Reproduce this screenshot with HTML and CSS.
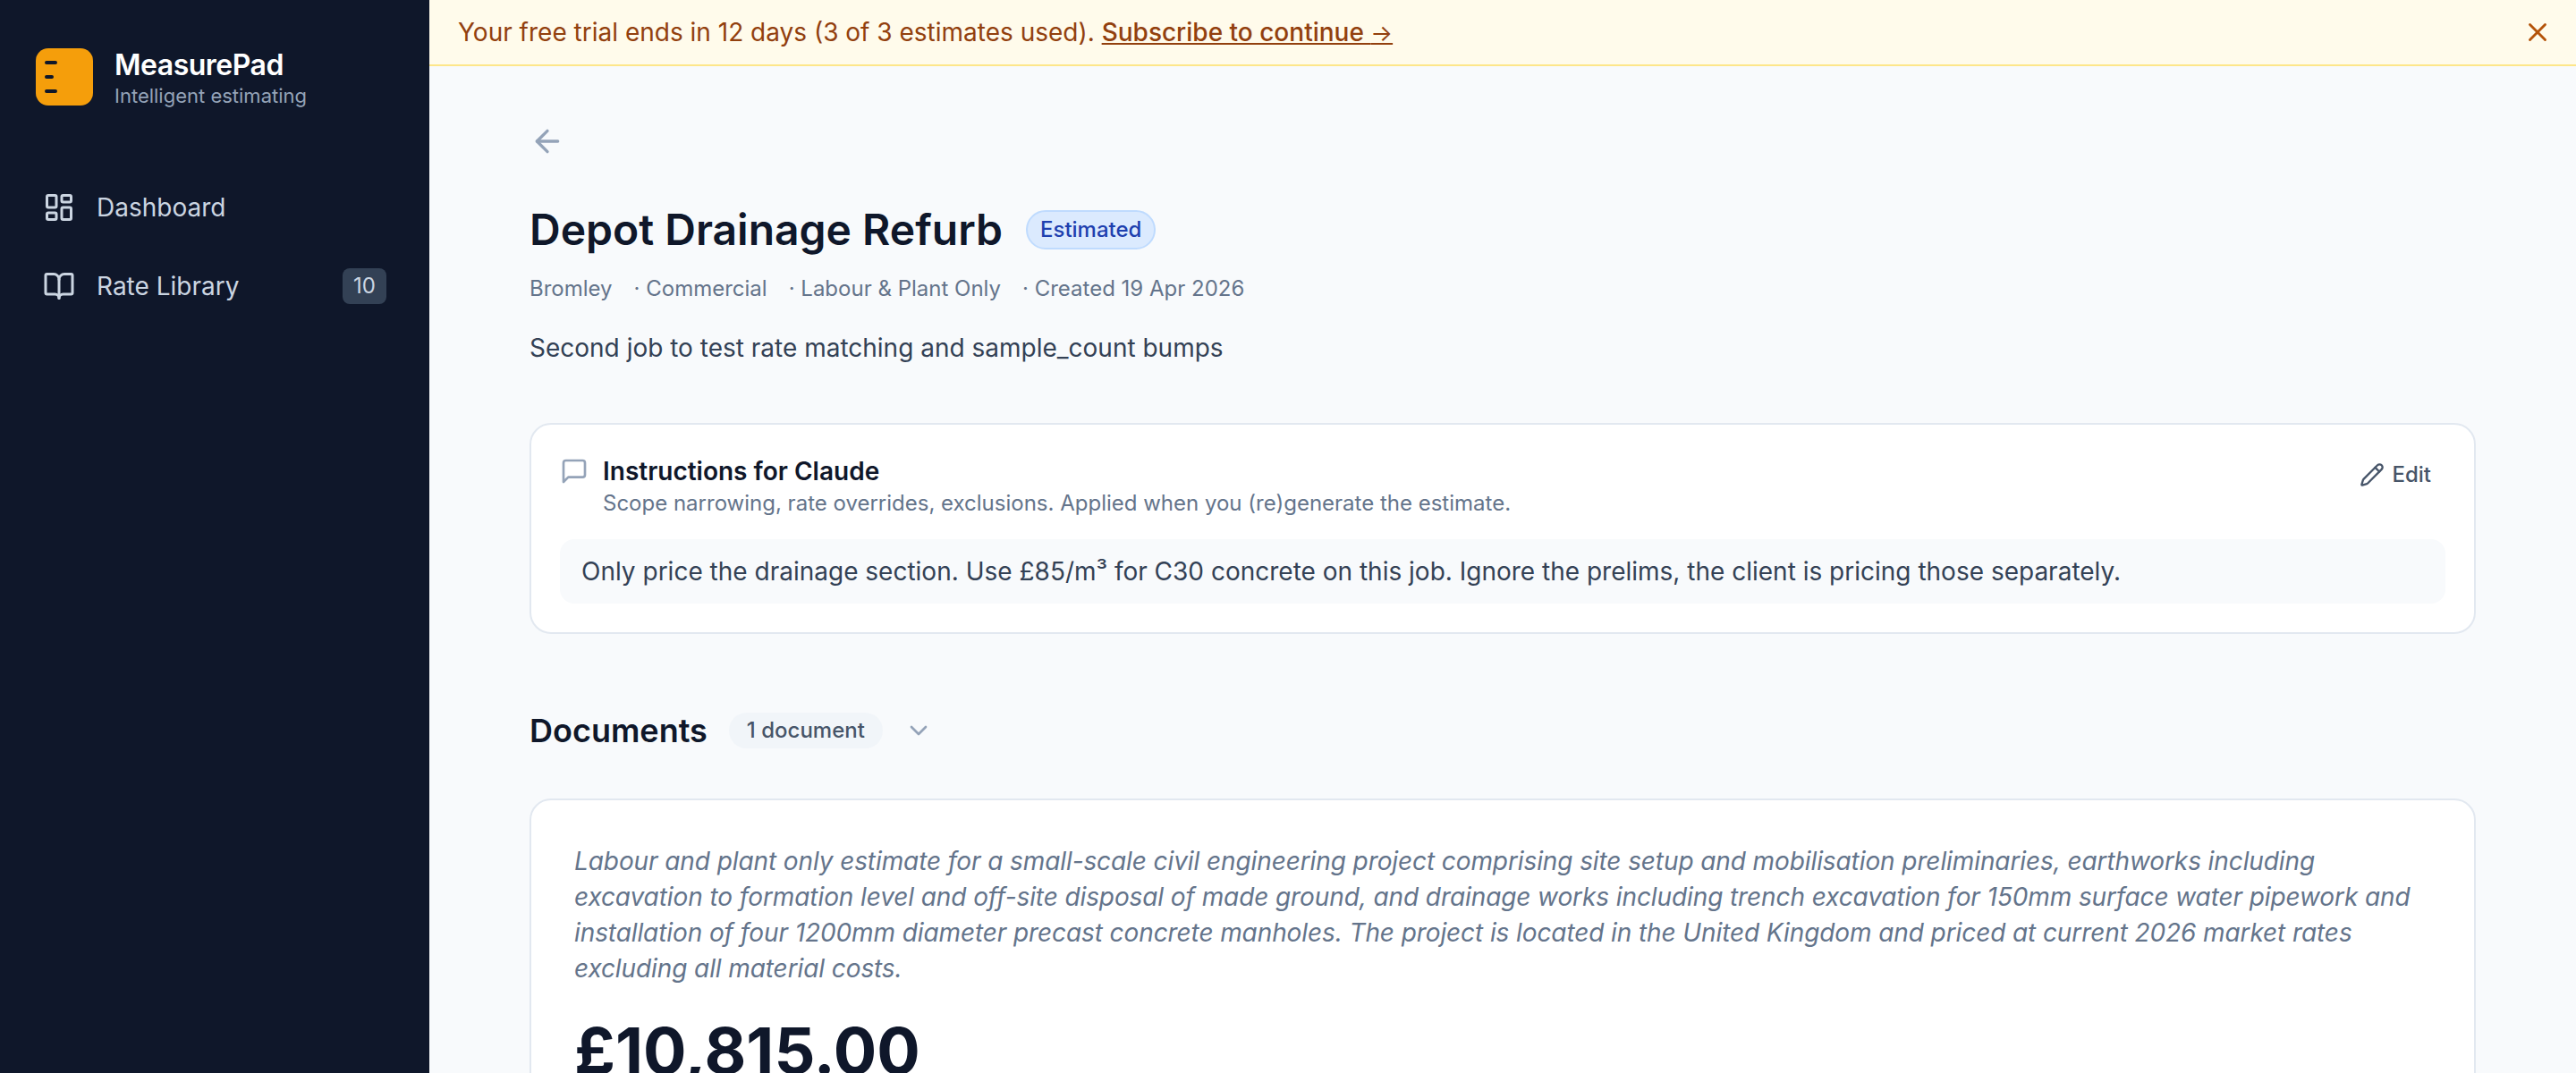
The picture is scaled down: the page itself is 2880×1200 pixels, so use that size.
FILE: index.html
```html
<!DOCTYPE html>
<html lang="en">
<head>
<meta charset="utf-8">
<title>MeasurePad</title>
<link rel="stylesheet" href="styles.css">
</head>
<body>
<div class="app">
  <aside class="sidebar">
    <div class="brand">
      <svg class="logo" viewBox="0 0 64 64" aria-hidden="true">
        <rect width="64" height="64" rx="14" fill="#f59e0b"/>
        <path d="M12 16h10M12 32h6M12 48h10" stroke="#0f172a" stroke-width="4" stroke-linecap="round" fill="none"/>
      </svg>
      <div class="brand-text">
        <div class="brand-name">MeasurePad</div>
        <div class="brand-sub">Intelligent estimating</div>
      </div>
    </div>
    <nav class="nav">
      <a class="nav-item">
        <svg class="icon nav-icon" viewBox="0 0 24 24"><rect x="3" y="3" width="7" height="9" rx="1"/><rect x="14" y="3" width="7" height="5" rx="1"/><rect x="14" y="12" width="7" height="9" rx="1"/><rect x="3" y="16" width="7" height="5" rx="1"/></svg>
        <span class="nav-label">Dashboard</span>
      </a>
      <a class="nav-item">
        <svg class="icon nav-icon" viewBox="0 0 24 24"><path d="M12 7v14"/><path d="M3 18a1 1 0 0 1-1-1V4a1 1 0 0 1 1-1h5a4 4 0 0 1 4 4 4 4 0 0 1 4-4h5a1 1 0 0 1 1 1v13a1 1 0 0 1-1 1h-6a3 3 0 0 0-3 3 3 3 0 0 0-3-3z"/></svg>
        <span class="nav-label">Rate Library</span>
        <span class="nav-count">10</span>
      </a>
    </nav>
  </aside>
  <div class="main">
    <div class="banner">
      <p class="banner-text">Your free trial ends in 12 days (3 of 3 estimates used). <a class="banner-link">Subscribe to continue <span class="banner-arrow">→</span></a></p>
      <svg class="icon banner-close" viewBox="0 0 24 24"><path d="M18 6 6 18"/><path d="m6 6 12 12"/></svg>
    </div>
    <div class="content">
      <svg class="icon back" viewBox="0 0 24 24"><path d="m12 19-7-7 7-7"/><path d="M19 12H5"/></svg>
      <div class="title-row">
        <h1 class="title">Depot Drainage Refurb</h1>
        <span class="status">Estimated</span>
      </div>
      <div class="meta">
        <span>Bromley</span>
        <span>· Commercial</span>
        <span>· Labour &amp; Plant Only</span>
        <span>· Created 19 Apr 2026</span>
      </div>
      <p class="desc">Second job to test rate matching and sample_count bumps</p>

      <section class="card instructions">
        <div class="instr-head">
          <svg class="icon instr-icon" viewBox="0 0 24 24"><path d="M21 15a2 2 0 0 1-2 2H7l-4 4V5a2 2 0 0 1 2-2h14a2 2 0 0 1 2 2z"/></svg>
          <div class="instr-titles">
            <h2 class="instr-title">Instructions for Claude</h2>
            <p class="instr-sub">Scope narrowing, rate overrides, exclusions. Applied when you (re)generate the estimate.</p>
          </div>
          <button class="edit">
            <svg class="icon edit-icon" viewBox="0 0 24 24"><path d="M21.174 6.812a1 1 0 0 0-3.986-3.987L3.842 16.174a2 2 0 0 0-.5.83l-1.321 4.352a.5.5 0 0 0 .623.622l4.353-1.32a2 2 0 0 0 .83-.497z"/><path d="m15 5 4 4"/></svg>
            <span>Edit</span>
          </button>
        </div>
        <div class="instr-body">Only price the drainage section. Use £85/m³ for C30 concrete on this job. Ignore the prelims, the client is pricing those separately.</div>
      </section>

      <div class="docs-head">
        <h2 class="docs-title">Documents</h2>
        <span class="docs-pill">1 document</span>
        <svg class="icon docs-chevron" viewBox="0 0 24 24"><path d="m6 9 6 6 6-6"/></svg>
      </div>

      <section class="card estimate">
        <p class="summary">Labour and plant only estimate for a small-scale civil engineering project comprising site setup and mobilisation preliminaries, earthworks including excavation to formation level and off-site disposal of made ground, and drainage works including trench excavation for 150mm surface water pipework and installation of four 1200mm diameter precast concrete manholes. The project is located in the United Kingdom and priced at current 2026 market rates excluding all material costs.</p>
        <div class="total">£10,815.00</div>
      </section>
    </div>
  </div>
</div>
</body>
</html>
```

FILE: styles.css
```css
* { box-sizing: border-box; }
html, body { margin: 0; height: 100%; overflow: hidden; }
body { font-family: Inter, "Liberation Sans", sans-serif; color: #0f172a; background: #f8fafc; }
h1, h2, p { margin: 0; }

.icon { fill: none; stroke: currentColor; stroke-width: 2; stroke-linecap: round; stroke-linejoin: round; flex: none; display: block; }

.app { display: flex; height: 1200px; overflow: hidden; }

.sidebar { width: 480px; flex: none; background: #0f172a; }
.brand { display: flex; align-items: center; gap: 24px; height: 118px; padding: 54px 40px 0; }
.logo { width: 64px; height: 64px; flex: none; display: block; }
.brand-text { margin-top: 2px; }
.brand-name { font-size: 32px; line-height: 40px; font-weight: 600; color: #fff; letter-spacing: -0.5px; }
.brand-sub { font-size: 22px; line-height: 28px; color: #94a3b8; }
.nav { display: flex; flex-direction: column; gap: 8px; padding: 74px 48px 0; }
.nav-item { display: flex; align-items: center; gap: 24px; height: 80px; color: #cbd5e1; }
.nav-icon { width: 36px; height: 36px; }
.nav-label { font-size: 28px; line-height: 40px; flex: 1; }
.nav-count { background: #334155; color: #cbd5e1; font-size: 24px; line-height: 40px; height: 40px; padding: 0 12px; border-radius: 8px; }

.main { flex: 1; min-width: 0; display: flex; flex-direction: column; }
.banner { flex: none; display: flex; align-items: center; justify-content: space-between; height: 74px; padding: 0 26px 0 32px; background: #fffbeb; border-bottom: 2px solid #fde68a; }
.banner-text { font-size: 28px; line-height: 40px; color: #92400e; }
.banner-link { text-decoration: underline; font-weight: 500; }
.banner-arrow { font-size: 26px; font-weight: 400; }
.banner-close { width: 34px; height: 34px; color: #b45309; }

.content { flex: none; padding: 64px 112px 0; }
.back { width: 40px; height: 40px; color: #94a3b8; }
.title-row { display: flex; align-items: center; gap: 26px; margin-top: 47px; }
.title { font-size: 48px; line-height: 64px; font-weight: 600; }
.status { display: block; height: 44px; padding: 0 14px; border: 2px solid #bfdbfe; border-radius: 22px; background: #dbeafe; color: #1e40af; font-size: 24px; line-height: 40px; font-weight: 500; }
.meta { display: flex; gap: 24px; margin-top: 16px; font-size: 24px; line-height: 36px; color: #64748b; }
.desc { margin-top: 28px; font-size: 28px; line-height: 40px; color: #334155; }

.card { background: #fff; border: 2px solid #e2e8f0; border-radius: 24px; }
.instructions { margin-top: 64px; padding: 32px; }
.instr-head { display: flex; align-items: flex-start; gap: 16px; }
.instr-icon { width: 32px; height: 32px; color: #94a3b8; margin-top: 4px; }
.instr-titles { flex: 1; }
.instr-title { font-size: 28px; line-height: 40px; font-weight: 600; }
.instr-sub { font-size: 24px; line-height: 32px; color: #64748b; }
.edit { display: flex; align-items: center; gap: 8px; padding: 8px 16px; border: 0; background: none; font: 500 24px/32px Inter, sans-serif; color: #475569; }
.edit-icon { width: 28px; height: 28px; }
.instr-body { margin-top: 24px; padding: 16px 24px; border-radius: 16px; background: #f8fafc; font-size: 28px; line-height: 40px; color: #334155; }

.docs-head { display: flex; align-items: center; gap: 24px; margin-top: 84px; }
.docs-title { font-size: 36px; line-height: 48px; font-weight: 600; }
.docs-pill { height: 40px; padding: 0 20px; border-radius: 20px; background: #f1f5f9; color: #475569; font-size: 24px; line-height: 40px; font-weight: 500; }
.docs-chevron { width: 32px; height: 32px; color: #94a3b8; }

.estimate { margin-top: 52px; padding: 48px; height: 600px; }
.summary { font-size: 28px; line-height: 40px; font-style: italic; letter-spacing: -0.1px; color: #64748b; }
.total { margin-top: 32px; font-size: 72px; line-height: 80px; font-weight: 700; }
```
